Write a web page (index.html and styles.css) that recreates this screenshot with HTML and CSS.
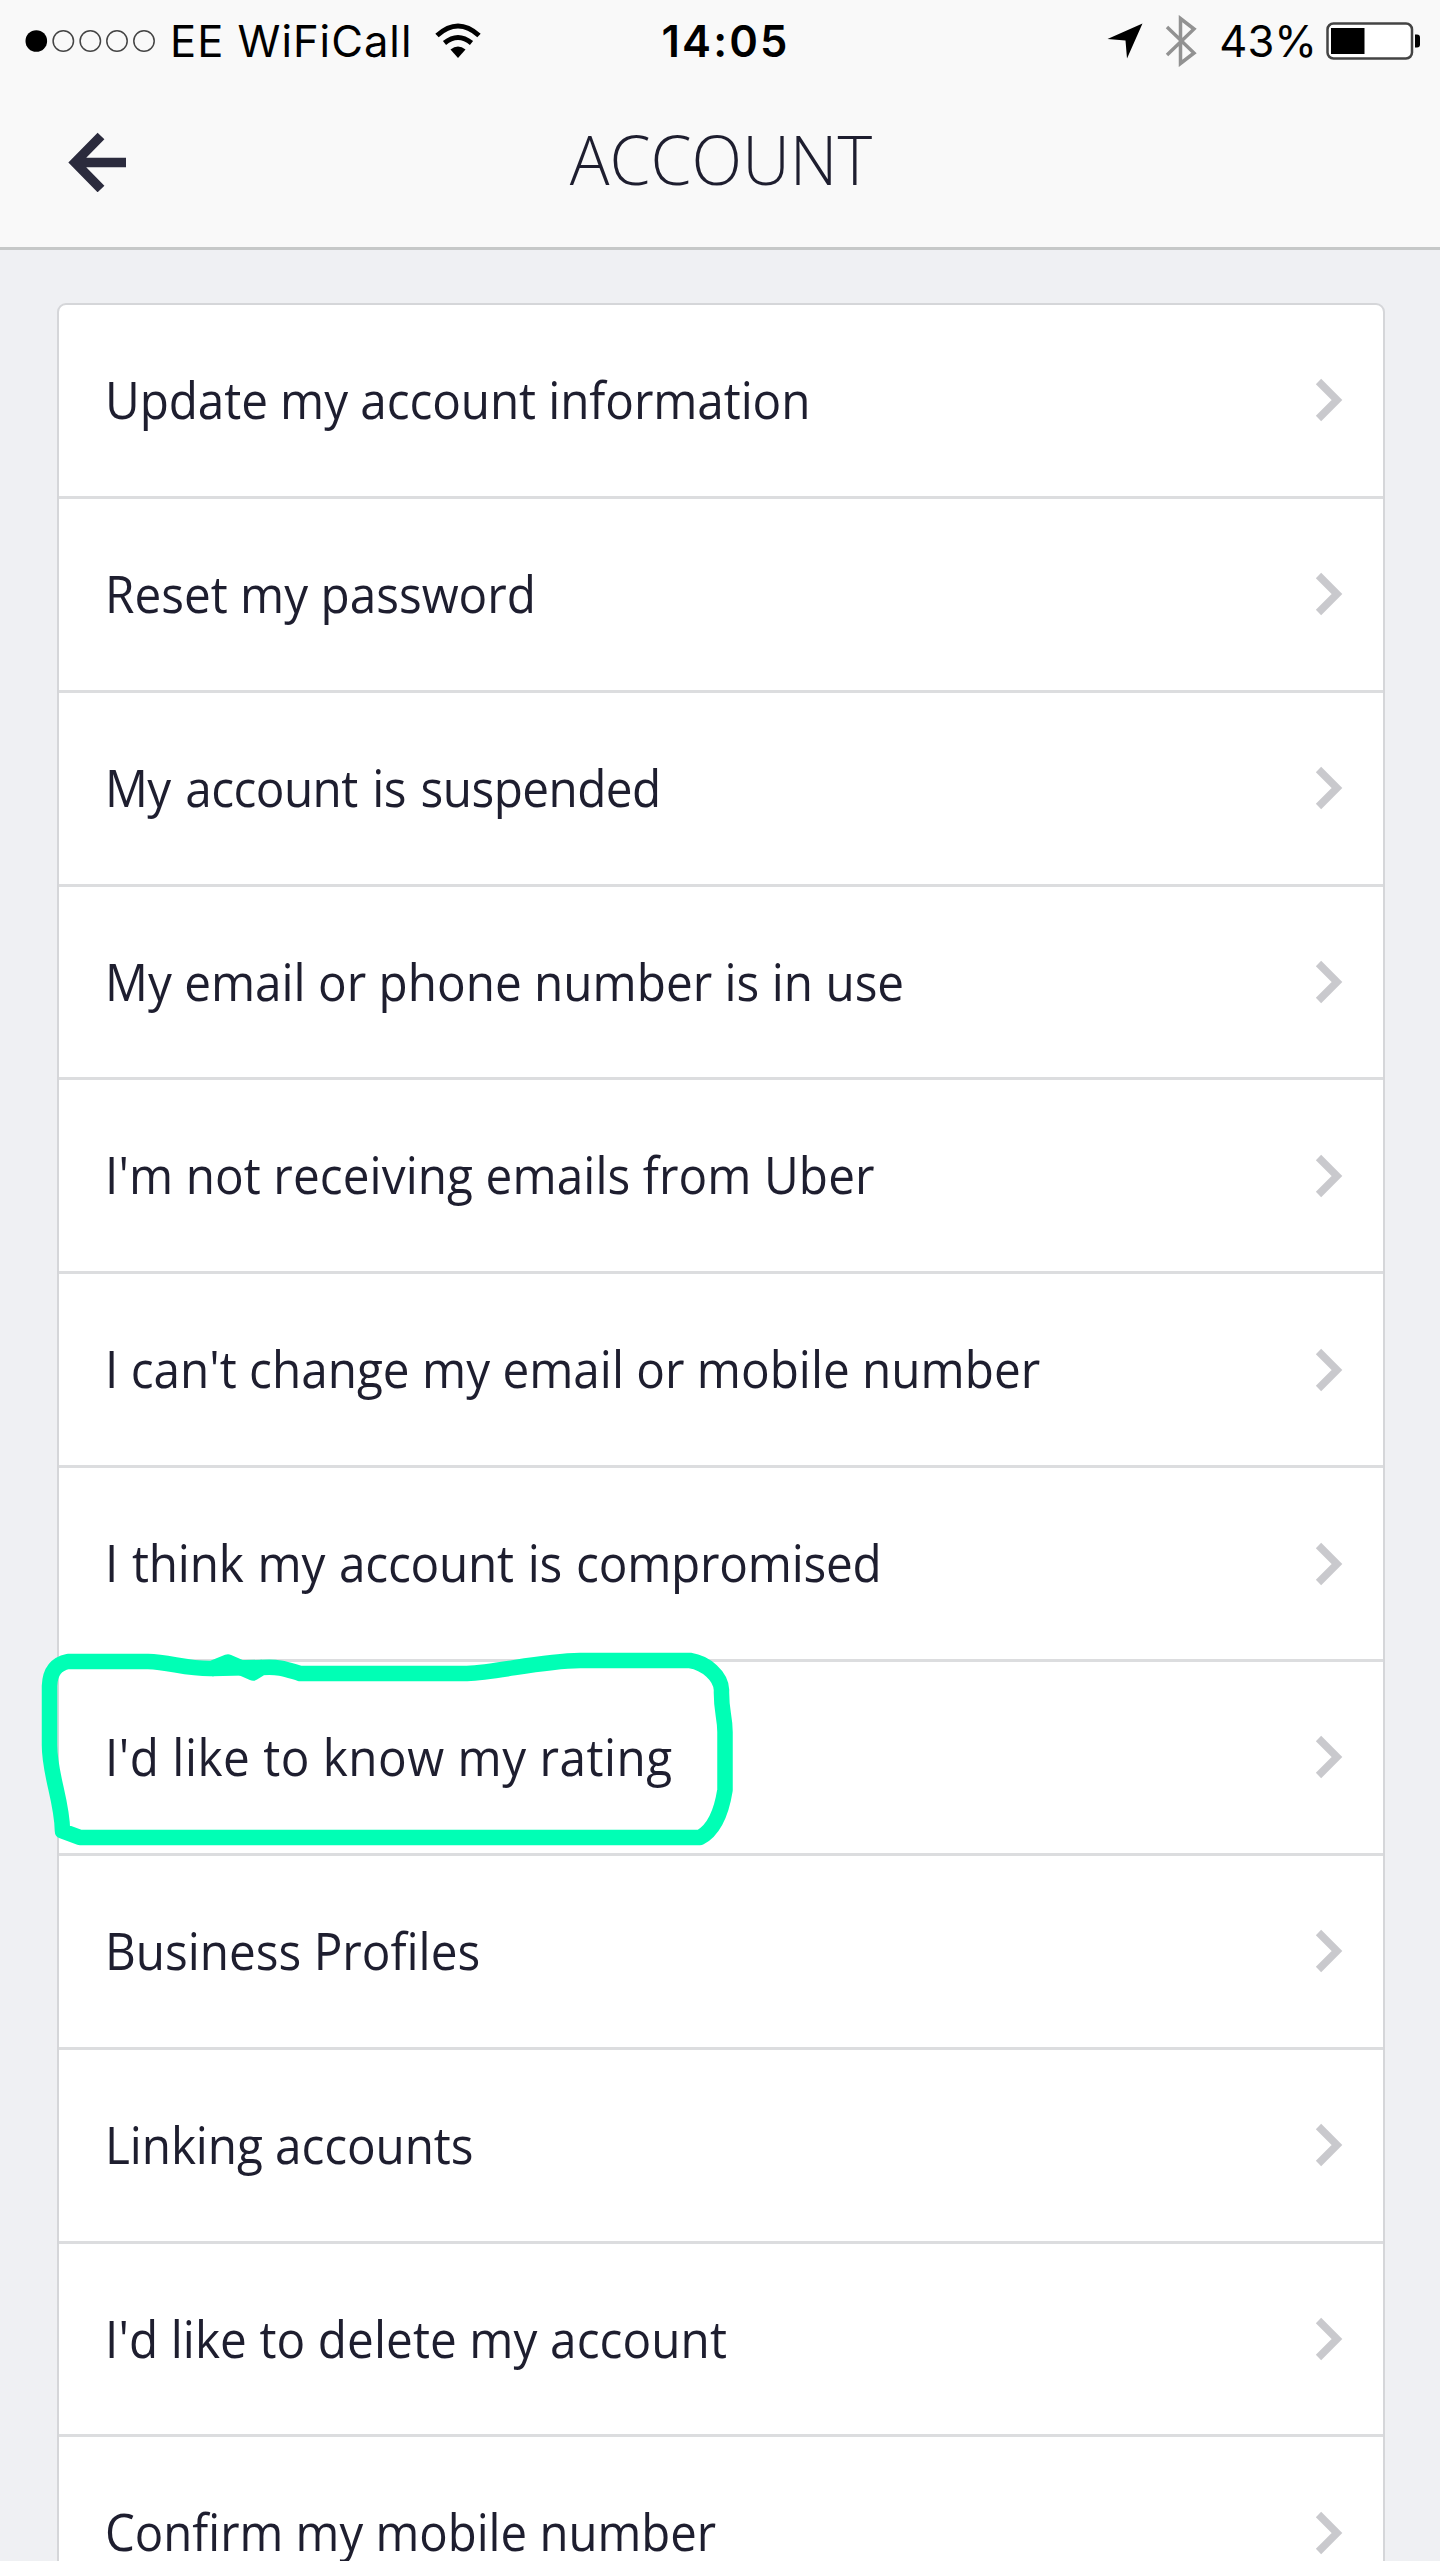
FILE: index.html
```html
<!DOCTYPE html>
<html>
  <head>
    <meta charset="utf-8" />
    <title>Account</title>
    <link rel="stylesheet" href="styles.css">
  </head>
  <body>
    <svg class="hidden">
      <symbol id="chevron" viewBox="0 0 28 44">
        <path d="M3.500 3.500L22 22L3.500 40.500" fill="none" stroke="#c9c9cd" stroke-width="7.500" />
      </symbol>
    </svg>

    <header class="header">
      <div class="status-bar">
        <div class="status-left">
          <svg class="signal" width="130" height="24" viewBox="0 0 130 24">
            <circle cx="11.3" cy="12" r="10.8" fill="#000" />
            <g fill="none" stroke="#444" stroke-width="1.5">
              <circle cx="38.3" cy="12" r="10.2" />
              <circle cx="65.3" cy="12" r="10.2" />
              <circle cx="92" cy="12" r="10.2" />
              <circle cx="119" cy="12" r="10.2" />
            </g>
          </svg>
          <span class="carrier">EE WiFiCall</span>
          <svg class="wifi" width="46" height="36" viewBox="0 0 46 36">
            <g fill="none" stroke="#000" stroke-width="5">
              <path d="M2 12.5Q23-6.500 44 12.500" />
              <path d="M9.500 20Q23 9 36.500 20" />
            </g>
            <path d="M15.500 26.500Q23 20.500 30.500 26.500L23 35Z" />
          </svg>
        </div>
        <span class="time">14:05</span>
        <div class="status-right">
          <svg class="location" width="36" height="36" viewBox="0 0 36 36">
            <path d="M35.500 0.500L20 35.500L18.500 17.500L0.500 16Z" />
          </svg>
          <svg class="bluetooth" width="32" height="52" viewBox="0 0 32 52">
            <path d="M2 12L29 38L15.500 48.500V3.500L29 14L2 40" fill="none" stroke="#929292" stroke-width="3.500" />
          </svg>
          <span class="percent">43%</span>
          <svg class="battery" width="96" height="38" viewBox="0 0 96 38">
            <rect x="1.500" y="1.500" width="84.500" height="35" rx="6" fill="#fff" stroke="#444" stroke-width="2.500" />
            <rect x="5" y="6" width="33.500" height="26" />
            <path d="M89 12.500h2q3 0 3 3v7q0 3-3 3h-2z" />
          </svg>
        </div>
      </div>
      <div class="nav-bar">
        <svg class="back" width="60" height="60" viewBox="0 0 60 60">
          <path d="M34 4L8 30.500L34 57M10 30.500H59" fill="none" stroke="#2b2b3d" stroke-width="9.500" />
        </svg>
        <h1>ACCOUNT</h1>
      </div>
    </header>

    <ul class="menu">
      <li class="menu-item">
        <span class="label tight">Update my account information</span>
        <svg class="chevron"><use href="#chevron" /></svg>
      </li>
      <li class="menu-item">
        <span class="label">Reset my password</span>
        <svg class="chevron"><use href="#chevron" /></svg>
      </li>
      <li class="menu-item">
        <span class="label spaced">My account is suspended</span>
        <svg class="chevron"><use href="#chevron" /></svg>
      </li>
      <li class="menu-item">
        <span class="label">My email or phone number is in use</span>
        <svg class="chevron"><use href="#chevron" /></svg>
      </li>
      <li class="menu-item">
        <span class="label loose">I'm not receiving emails from Uber</span>
        <svg class="chevron"><use href="#chevron" /></svg>
      </li>
      <li class="menu-item">
        <span class="label">I can't change my email or mobile number</span>
        <svg class="chevron"><use href="#chevron" /></svg>
      </li>
      <li class="menu-item">
        <span class="label spaced-light">I think my account is compromised</span>
        <svg class="chevron"><use href="#chevron" /></svg>
      </li>
      <li class="menu-item">
        <span class="label looser">I'd like to know my rating</span>
        <svg class="chevron"><use href="#chevron" /></svg>
        <svg class="marker" width="740" height="220" viewBox="20 1640 740 220">
          <path d="M68 1661.500H148C170 1662 186 1669 212 1668.500L228 1662L253 1673L262 1667.500C280 1666 288 1670 300 1673.500H467C500 1672 540 1661 580 1660.500H690C706 1663 721 1676 721.500 1690C721 1712 725 1716 725 1732V1790C722 1809 716 1829 700 1837.500H80L62.500 1831C62 1800 49.500 1775 49.500 1745V1686C50 1672 56 1664 68 1661.500Z" />
          <path d="M212 1668.500L262 1667.500" />
        </svg>
      </li>
      <li class="menu-item">
        <span class="label">Business Profiles</span>
        <svg class="chevron"><use href="#chevron" /></svg>
      </li>
      <li class="menu-item">
        <span class="label tight">Linking accounts</span>
        <svg class="chevron"><use href="#chevron" /></svg>
      </li>
      <li class="menu-item">
        <span class="label loose">I'd like to delete my account</span>
        <svg class="chevron"><use href="#chevron" /></svg>
      </li>
      <li class="menu-item">
        <span class="label narrow">Confirm my mobile number</span>
        <svg class="chevron"><use href="#chevron" /></svg>
      </li>
    </ul>
  </body>
</html>
```
FILE: styles.css
```css
body {
  margin: 0;
  height: 2561px;
  overflow: hidden;
  background: #eff0f3;
  color: #1e1e2f;
  font-family: "Open Sans", "Noto Sans", sans-serif;
}
.hidden {
  display: none;
}
.header {
  box-sizing: border-box;
  height: 250px;
  background: #f9f9f9;
  border-bottom: 3px solid #c6c8c8;
}
/* Status bar */
.status-bar {
  display: grid;
  grid-template-columns: 1fr auto 1fr;
  align-items: center;
  height: 82px;
  padding: 0 18px 0 25px;
  color: #000;
  font-family: Inter, "Liberation Sans", sans-serif;
  font-size: 43.5px;
}
.status-left,
.status-right {
  display: flex;
  align-items: center;
}
.status-right {
  justify-content: flex-end;
}
.carrier {
  margin: 0 23px 0 15px;
  letter-spacing: 1px;
}
.time {
  margin-left: 4px;
  font-weight: 600;
  letter-spacing: 2.1px;
}
.bluetooth {
  margin: 0 26px 0 22px;
}
.percent {
  margin: 0 9px 0 -4px;
}
/* Title row */
.nav-bar {
  display: grid;
  grid-template-columns: 200px 1fr 200px;
  align-items: center;
  height: 160px;
}
.back {
  margin-left: 67px;
}
h1 {
  margin: 0;
  padding: 0 0 6px 2px;
  font-size: 68px;
  font-weight: 350;
  line-height: 1;
  text-align: center;
  transform: scaleX(0.973);
}
/* Menu */
.menu {
  margin: 53px 55px 0 57px;
  padding: 0;
  list-style: none;
  background: #fff;
  border: 2px solid #d5d6d9;
  border-radius: 9px;
}
.menu-item {
  position: relative;
  display: flex;
  align-items: center;
  justify-content: space-between;
  box-sizing: border-box;
  height: 193.87px;
  padding: 0 40px 0 46px;
  border-bottom: 3px solid #dcdddf;
}
.label {
  padding-bottom: 3px;
  font-size: 52px;
  line-height: 1;
  white-space: nowrap;
  transform: scaleX(0.917);
  transform-origin: left;
}
.tight {
  letter-spacing: -0.1px;
}
.spaced {
  letter-spacing: -0.6px;
  word-spacing: 3px;
}
.spaced-light {
  letter-spacing: -0.25px;
  word-spacing: 2px;
}
.loose {
  letter-spacing: 0.1px;
}
.looser {
  letter-spacing: 0.55px;
}
.narrow {
  transform: scaleX(0.91);
}
.chevron {
  width: 28px;
  height: 44px;
}
/* Hand drawn loop around the rating row */
.marker {
  position: absolute;
  left: -39px;
  top: -22px;
}
.marker path {
  fill: none;
  stroke: #00ffb5;
  stroke-width: 15.5;
  stroke-linejoin: round;
}
```
